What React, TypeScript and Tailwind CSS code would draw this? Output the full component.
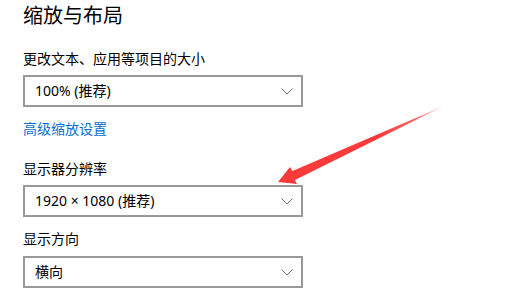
import React from "react";

const Chevron = () => (
  <svg width="12" height="7" viewBox="0 0 12 7" className="shrink-0">
    <path d="M0.5 0.5 L6 6 L11.5 0.5" fill="none" stroke="#707070" strokeWidth="1" />
  </svg>
);

const Select = ({ value, className = "" }: { value: string; className?: string }) => (
  <div
    className={`flex h-[32px] w-[280px] items-center justify-between border-2 border-[#999999] bg-white pl-[10px] pr-[8px] text-[14px] leading-[20px] text-black ${className}`}
  >
    <span>{value}</span>
    <Chevron />
  </div>
);

export default function App() {
  return (
    <div
      className="relative h-[308px] w-[505px] overflow-hidden bg-white pl-[23px] pt-[2px] text-black"
      style={{ fontFamily: '"Noto Sans", "Noto Sans CJK SC", sans-serif' }}
    >
      <div className="text-[20px] leading-[28px]">缩放与布局</div>
      <div className="mt-[19px] text-[14px] leading-[20px]">更改文本、应用等项目的大小</div>
      <Select value="100% (推荐)" className="mt-[6px]" />
      <div className="mt-[12px] text-[14px] leading-[20px] text-[#0a6ed1]">高级缩放设置</div>
      <div className="mt-[20px] text-[14px] leading-[20px]">显示器分辨率</div>
      <Select value="1920 × 1080 (推荐)" className="mt-[6px]" />
      <div className="mt-[12px] text-[14px] leading-[20px]">显示方向</div>
      <Select value="横向" className="mt-[7px]" />

      <svg className="absolute left-0 top-0" width="505" height="308" viewBox="0 0 505 308">
        <defs>
          <linearGradient id="ag" x1="447" y1="105" x2="278" y2="182" gradientUnits="userSpaceOnUse">
            <stop offset="0" stopColor="#fb3a3a" stopOpacity="0.05" />
            <stop offset="0.2" stopColor="#fb3a3a" stopOpacity="0.8" />
            <stop offset="0.4" stopColor="#fb3a3a" stopOpacity="1" />
            <stop offset="1" stopColor="#fb3a3a" stopOpacity="1" />
          </linearGradient>
        </defs>
        <polygon
          points="278,182 290,167 292.5,171 447,104.5 295,180 297,184"
          fill="url(#ag)"
        />
      </svg>
    </div>
  );
}
